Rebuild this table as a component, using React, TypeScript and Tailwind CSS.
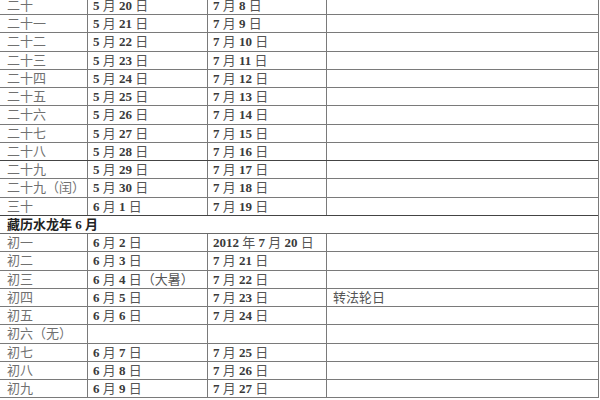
import React from "react";

type Row = { a: string; b: string; c: string; d: string } | { header: string };

const rows: Row[] = [
  { a: "二十", b: "5 月 20 日", c: "7 月 8 日", d: "" },
  { a: "二十一", b: "5 月 21 日", c: "7 月 9 日", d: "" },
  { a: "二十二", b: "5 月 22 日", c: "7 月 10 日", d: "" },
  { a: "二十三", b: "5 月 23 日", c: "7 月 11 日", d: "" },
  { a: "二十四", b: "5 月 24 日", c: "7 月 12 日", d: "" },
  { a: "二十五", b: "5 月 25 日", c: "7 月 13 日", d: "" },
  { a: "二十六", b: "5 月 26 日", c: "7 月 14 日", d: "" },
  { a: "二十七", b: "5 月 27 日", c: "7 月 15 日", d: "" },
  { a: "二十八", b: "5 月 28 日", c: "7 月 16 日", d: "" },
  { a: "二十九", b: "5 月 29 日", c: "7 月 17 日", d: "" },
  { a: "二十九（闰）", b: "5 月 30 日", c: "7 月 18 日", d: "" },
  { a: "三十", b: "6 月 1 日", c: "7 月 19 日", d: "" },
  { header: "藏历水龙年 6 月" },
  { a: "初一", b: "6 月 2 日", c: "2012 年 7 月 20 日", d: "" },
  { a: "初二", b: "6 月 3 日", c: "7 月 21 日", d: "" },
  { a: "初三", b: "6 月 4 日（大暑）", c: "7 月 22 日", d: "" },
  { a: "初四", b: "6 月 5 日", c: "7 月 23 日", d: "转法轮日" },
  { a: "初五", b: "6 月 6 日", c: "7 月 24 日", d: "" },
  { a: "初六（无）", b: "", c: "", d: "" },
  { a: "初七", b: "6 月 7 日", c: "7 月 25 日", d: "" },
  { a: "初八", b: "6 月 8 日", c: "7 月 26 日", d: "" },
  { a: "初九", b: "6 月 9 日", c: "7 月 27 日", d: "" },
];

function DateText({ s }: { s: string }) {
  const parts = s.split(/(\d+)/);
  return (
    <span>
      {parts.map((p, i) =>
        /^\d+$/.test(p) ? (
          <span key={i} className="font-bold text-[#3a3a3a]">
            {p}
          </span>
        ) : (
          <span key={i} className="text-[#555]">
            {p}
          </span>
        )
      )}
    </span>
  );
}

export default function App() {
  return (
    <div
      className="w-[600px] h-[400px] overflow-hidden bg-white"
      style={{ fontFamily: '"Liberation Serif", "Noto Sans CJK SC", serif' }}
    >
      <div className="-mt-[3.25px] w-[599px] border-r border-[#7a7a7a]">
        {rows.map((r, i) =>
          "header" in r ? (
            <div
              key={i}
              className="h-[18.25px] flex items-center pl-[7px] border-b border-[#6a6a6a] text-[13px] font-bold text-[#222]"
            >
              {r.header}
            </div>
          ) : (
            <div
              key={i}
              className={`h-[18.25px] grid grid-cols-[88px_120px_119px_271px] border-b text-[13px] leading-none ${
                i === 8 || i === 11 ? "border-[#444]" : "border-[#7a7a7a]"
              }`}
            >
              <div className="border-r border-[#7a7a7a] flex items-center pl-[7px] text-[#707070]">
                {r.a}
              </div>
              <div className="border-r border-[#7a7a7a] flex items-center pl-[5px]">
                <DateText s={r.b} />
              </div>
              <div className="border-r border-[#7a7a7a] flex items-center pl-[5px]">
                <DateText s={r.c} />
              </div>
              <div className="flex items-center pl-[6px] text-[#555]">{r.d}</div>
            </div>
          )
        )}
      </div>
    </div>
  );
}
